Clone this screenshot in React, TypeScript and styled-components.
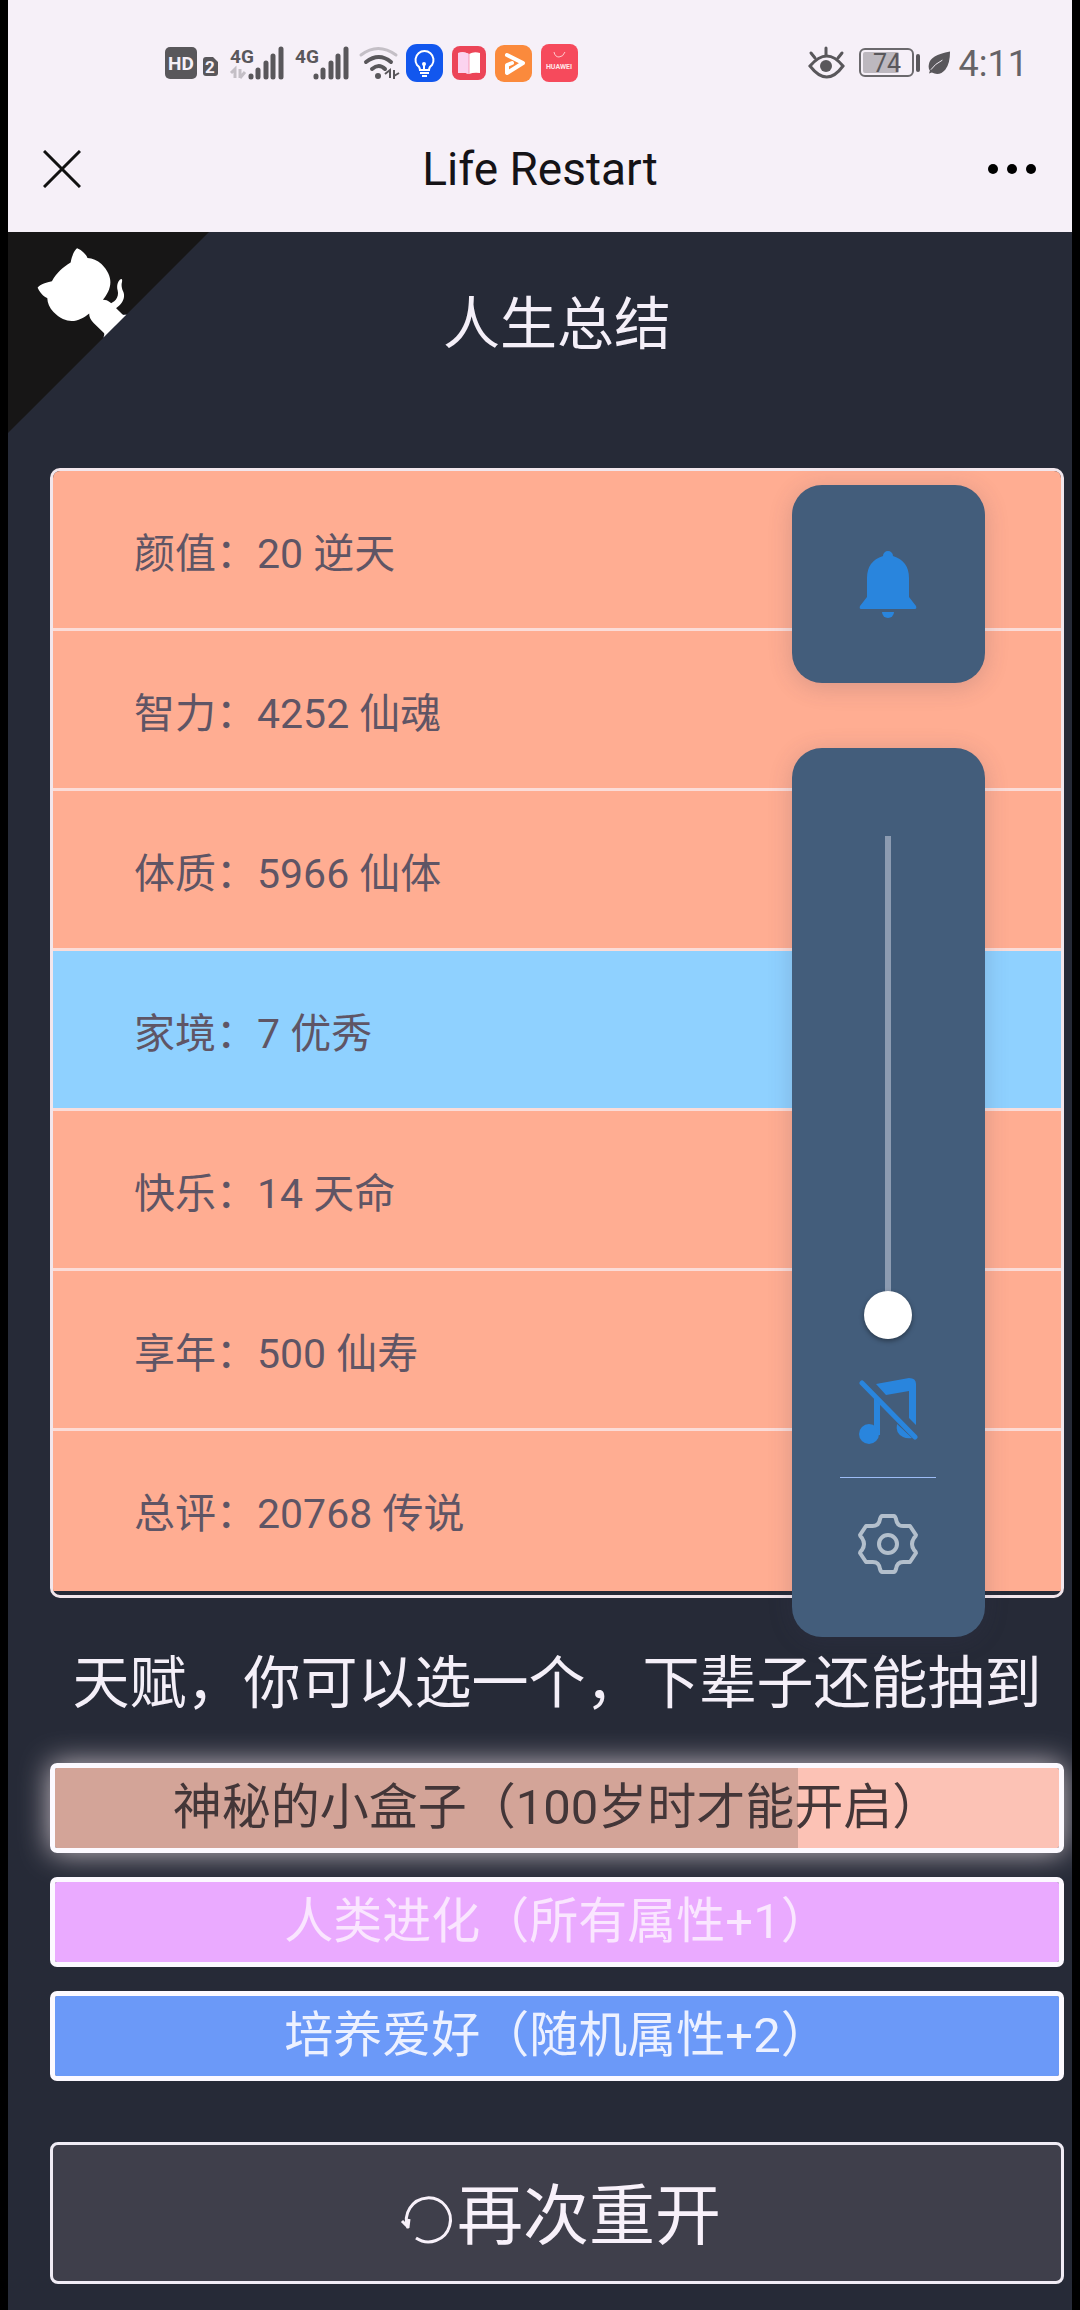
import React, { useState } from "react";
import styled, { createGlobalStyle } from "styled-components";

const GlobalStyle = createGlobalStyle`
  * { box-sizing: border-box; }
  body {
    margin: 0;
    background: #000;
    font-family: Roboto, "Noto Sans CJK SC", sans-serif;
  }
  button { font-family: inherit; cursor: pointer; }
`;

const Phone = styled.div`
  position: relative;
  min-height: 100vh;
  padding: 0 8px;
  background: #000;
`;

const StatusBar = styled.header`
  display: flex;
  justify-content: space-between;
  align-items: center;
  height: 106px;
  padding: 20px 44px 0 157px;
  background: #f6f0f8;
  color: #59575b;
`;

const StatusGroup = styled.div<{ $gap: number }>`
  display: flex;
  align-items: center;
  gap: ${(p) => p.$gap}px;
`;

const Clock = styled.time`
  padding-top: 2px;
  font-size: 36px;
  line-height: 44px;
  color: #656367;
`;

const NavBar = styled.nav`
  display: grid;
  grid-template-columns: 120px 1fr 120px;
  align-items: center;
  height: 126px;
  background: #f6f0f8;
`;

const NavButton = styled.button<{ $end?: boolean }>`
  display: flex;
  justify-content: ${(p) => (p.$end ? "flex-end" : "flex-start")};
  padding: 12px 35px;
  border: 0;
  background: none;
  color: #111;
`;

const NavTitle = styled.h1`
  margin: 0;
  text-align: center;
  font-size: 46px;
  line-height: 56px;
  font-weight: 400;
  color: #151317;
`;

const Page = styled.main`
  position: relative;
  display: flex;
  flex-direction: column;
  min-height: calc(100vh - 232px);
  padding: 51px 8px 26px 42px;
  overflow: hidden;
  background: #262a37;
  color: #f4eff8;
`;

const CornerLink = styled.a`
  position: absolute;
  top: -19px;
  left: 0;
  display: block;
  line-height: 0;
`;

const Heading = styled.h2`
  margin: 0;
  text-align: center;
  font-size: 57px;
  line-height: 84px;
  font-weight: 400;
`;

const Summary = styled.ul`
  margin: 101px 0 0;
  padding: 0 0 4px;
  list-style: none;
  border: 3px solid #f2e6ec;
  border-radius: 10px;
  overflow: hidden;
`;

const SummaryRow = styled.li<{ $blue?: boolean }>`
  padding: 9px 81px 0;
  border-bottom: 3px solid #fbdcd8;
  font-size: 41px;
  line-height: 148px;
  color: #5f5565;
  background: ${(p) => (p.$blue ? "#8fd1ff" : "#ffad92")};
  &:last-child { border-bottom-color: #ffad92; }
`;

const TalentHeading = styled(Heading)`
  margin-top: 44px;
  white-space: nowrap;
`;

const TalentList = styled.div`
  display: flex;
  flex-direction: column;
  gap: 24px;
  margin-top: 37px;
`;

const Talent = styled.button<{ $bg: string; $color: string; $glow?: boolean }>`
  width: 100%;
  height: 90px;
  padding: 0;
  border: 5px solid #fcf9ff;
  border-radius: 7px;
  background: ${(p) => p.$bg};
  background-clip: padding-box;
  box-shadow: ${(p) => (p.$glow ? "0 0 30px rgba(255, 240, 245, 0.75)" : "none")};
  font-size: 49px;
  line-height: 76px;
  color: ${(p) => p.$color};
`;

const RestartButton = styled.button`
  display: flex;
  justify-content: center;
  align-items: center;
  width: 100%;
  height: 142px;
  margin-top: 61px;
  padding: 8px 0 0;
  border: 3px solid #f0ecf5;
  border-radius: 8px;
  background: #3f3f4b;
  color: #f8f1fa;
  font-size: 66px;
  line-height: 96px;
`;

const VolumeOverlay = styled.aside`
  position: absolute;
  top: 485px;
  right: 95px;
  display: flex;
  flex-direction: column;
  gap: 65px;
  width: 193px;
`;

const Card = styled.div`
  display: flex;
  flex-direction: column;
  align-items: center;
  padding-right: 1px;
  border-radius: 30px;
  background: #435d7b;
  box-shadow: 0 4px 24px rgba(60, 60, 90, 0.2);
`;

const BellCard = styled(Card)`
  justify-content: center;
  height: 198px;
`;

const SliderCard = styled(Card)`
  height: 889px;
  padding-top: 88px;
`;

const IconButton = styled.button`
  display: flex;
  padding: 0;
  border: 0;
  background: none;
`;

const Slider = styled.input`
  appearance: none;
  writing-mode: vertical-lr;
  direction: rtl;
  width: 48px;
  height: 503px;
  margin: 0 0 39px;
  background: linear-gradient(#8c9bb1, #8c9bb1) center / 6px 100% no-repeat;
  &::-webkit-slider-thumb {
    appearance: none;
    width: 48px;
    height: 48px;
    border-radius: 50%;
    background: #fff;
    box-shadow: 0 2px 5px rgba(0, 0, 0, 0.4);
  }
`;

const Divider = styled.hr`
  width: 96px;
  margin: 31px 0 35px;
  border: 0;
  border-top: 1px solid #9dbcf5;
`;

const SignalIcon = ({ data }: { data?: boolean }) => (
  <svg width="56" height="44" viewBox="0 0 56 44" overflow="visible" aria-hidden="true">
    <text x="0" y="22" fontSize="19" fontWeight="700" fill="#59575b">4G</text>
    {data && (
      <path d="M1 32l4-4v9M10 28v9M10 37l5-6" fill="none" stroke="#c4bfc6" strokeWidth="3" />
    )}
    <path
      d="M21 35v1M28 29v7M36 22v14M43 15v21M51 8v28"
      stroke="#59575b"
      strokeWidth="5"
      strokeLinecap="round"
    />
  </svg>
);

const HdIcon = () => (
  <svg width="56" height="34" viewBox="0 0 56 34" aria-hidden="true">
    <rect x="0" y="1" width="32" height="32" rx="5" fill="#59575b" />
    <text x="16" y="24" fontSize="19" fontWeight="700" fill="#f6f0f8" textAnchor="middle">HD</text>
    <path d="M41 11h7l5 5v11q0 3-3 3h-9q-3 0-3-3v-13q0-3 3-3z" fill="#59575b" />
    <text x="45" y="27" fontSize="17" fontWeight="700" fill="#f6f0f8" textAnchor="middle">2</text>
  </svg>
);

const WifiIcon = () => (
  <svg width="37" height="36" viewBox="0 0 37 36" overflow="visible" aria-hidden="true">
    <g fill="none" strokeWidth="3" strokeLinecap="round">
      <path d="M1 10q17-13 35 0" stroke="#c4bfc6" />
      <path d="M6 17q13-10 25 0" stroke="#59575b" strokeWidth="4" />
      <path d="M12 24q7-6 13 0" stroke="#59575b" strokeWidth="4" />
    </g>
    <path d="M25 29l5-4v8M34 25v9M34 31l5-3" fill="none" stroke="#59575b" strokeWidth="2" />
    <circle cx="18" cy="31" r="3" fill="#59575b" />
  </svg>
);

const AppBulb = () => (
  <svg width="37" height="38" viewBox="0 0 37 38" aria-hidden="true">
    <rect width="37" height="38" rx="11" fill="#1257ee" />
    <g fill="none" stroke="#fff" strokeWidth="2">
      <path d="M14 26q0-3-3-5a9 9 0 1 1 15 0q-3 2-3 5z" />
      <path d="M14 29h9M16 32h5M18 26v-6" />
    </g>
    <circle cx="18" cy="20" r="2" fill="#fff" />
  </svg>
);

const AppBook = () => (
  <svg width="34" height="34" viewBox="0 0 34 34" aria-hidden="true">
    <rect width="34" height="34" rx="8" fill="#ec4558" />
    <path d="M6 7q6-2 11 1q5-3 11-1v20q-6-1-11 1q-5-2-11-1z" fill="#fff" />
    <path d="M6 7q6-2 11 1v20q-5-2-11-1z" fill="#fbd3ef" />
    <path d="M17 8v20" stroke="#f59bb4" />
  </svg>
);

const AppPlay = () => (
  <svg width="37" height="37" viewBox="0 0 37 37" aria-hidden="true">
    <rect width="37" height="37" rx="9" fill="#fb8a3c" />
    <path
      d="M12 10l16 8l-16 10v-8l5-2"
      fill="none"
      stroke="#fff"
      strokeWidth="4"
      strokeLinejoin="round"
      strokeLinecap="round"
    />
  </svg>
);

const AppHuawei = () => (
  <svg width="37" height="38" viewBox="0 0 37 38" aria-hidden="true">
    <rect width="37" height="38" rx="8" fill="#f64a5c" />
    <path d="M13 8q1 5 5 5t6-5" fill="none" stroke="#ffc9cd" strokeWidth="1" />
    <text x="18" y="25" fontSize="7" fontWeight="700" fill="#ffe6e8" textAnchor="middle">HUAWEI</text>
  </svg>
);

const EyeIcon = () => (
  <svg width="43" height="34" viewBox="0 0 43 34" aria-hidden="true">
    <g fill="none" stroke="#59575b" strokeWidth="3" strokeLinecap="round">
      <path d="M2 20q17-20 33 0q-16 22-33 0z" />
      <path d="M18 9v-7M7 12l-4-5M30 12l4-5" />
    </g>
    <circle cx="18" cy="20" r="6" fill="#59575b" />
  </svg>
);

const BatteryIcon = () => (
  <svg width="61" height="30" viewBox="0 0 61 30" aria-hidden="true">
    <rect x="1" y="1" width="53" height="27" rx="5" fill="none" stroke="#6b696d" strokeWidth="2" />
    <rect x="4" y="4" width="36" height="21" rx="2" fill="#bdb8bf" />
    <rect x="57" y="6" width="4" height="18" rx="2" fill="#59575b" />
    <text x="28" y="24" fontSize="25" fill="#59575b" textAnchor="middle">74</text>
  </svg>
);

const LeafIcon = () => (
  <svg width="23" height="26" viewBox="0 0 24 26" aria-hidden="true">
    <path d="M23 1q-21 4-22 13q-1 5 1 7l-1 3l3-1q8 4 14-3q5-6 5-19z" fill="#59575b" />
    <path d="M3 20q4-6 12-10" fill="none" stroke="#f6f0f8" strokeWidth="1" />
  </svg>
);

const CloseIcon = () => (
  <svg width="38" height="38" viewBox="0 0 38 38" aria-hidden="true">
    <path d="M1 1l36 36M37 1l-36 36" stroke="#111" strokeWidth="3" />
  </svg>
);

const MoreIcon = () => (
  <svg width="50" height="12" viewBox="0 0 50 12" aria-hidden="true">
    <circle cx="6" cy="6" r="5" />
    <circle cx="25" cy="6" r="5" />
    <circle cx="44" cy="6" r="5" />
  </svg>
);

const GithubCorner = () => (
  <svg width="220" height="220" viewBox="0 0 250 250" aria-hidden="true">
    <g transform="translate(250 0) scale(-1 1)">
      <path d="M0,0 L115,115 L130,115 L142,142 L250,250 L250,0 Z" fill="#171616" />
      <path
        d="M128.3,109.0 C113.8,99.7 119.0,89.6 119.0,89.6 C122.0,82.7 120.5,78.6 120.5,78.6 C119.2,72.0 123.4,76.3 123.4,76.3 C127.3,80.9 125.5,87.3 125.5,87.3 C122.9,97.6 130.6,101.9 134.4,103.2"
        fill="#fff"
      />
      <path
        d="M115.0,115.0 C114.9,115.1 118.7,116.5 119.8,115.4 L133.7,101.6 C136.9,99.2 139.9,98.4 142.2,98.6 C133.8,88.0 127.5,74.4 143.8,58.0 C148.5,53.4 154.0,51.2 159.7,51.0 C160.3,49.4 163.2,43.6 171.4,40.1 C171.4,40.1 176.1,42.5 178.8,56.2 C183.1,58.6 187.2,61.8 190.9,65.4 C194.5,69.0 197.7,73.2 200.1,77.6 C213.8,80.2 216.3,84.9 216.3,84.9 C212.7,93.1 206.9,96.0 205.4,96.6 C205.1,102.4 203.0,107.8 198.3,112.5 C181.9,128.9 168.3,122.5 157.7,114.1 C157.9,116.9 156.7,120.9 152.7,124.9 L141.0,136.5 C139.8,137.7 141.6,141.9 141.8,141.8 Z"
        fill="#fff"
      />
    </g>
  </svg>
);

const BellIcon = () => (
  <svg width="58" height="67" viewBox="0 0 58 67" fill="#2985dd" aria-hidden="true">
    <path d="M24 5a5 5 0 0 1 10 0q16 5 16 22v19l7 9q1 3-1 3h-54q-2 0-1-3l7-9v-19q0-17 16-22z" />
    <path d="M23 61h12a6 6 0 0 1-12 0z" />
  </svg>
);

const MusicOffIcon = () => (
  <svg width="60" height="68" viewBox="0 0 60 68" fill="#2985dd" aria-hidden="true">
    <path d="M18 6L51 0q7 0 7 6v41l-7-7v-27L28 17z" />
    <path d="M16 20l6 6v31h-6z" />
    <circle cx="11" cy="56" r="10" />
    <path d="M39 46l15 14q-5 1-9-1q-8-4-6-13z" />
    <path d="M4 5l53 54" stroke="#2985dd" strokeWidth="5" strokeLinecap="round" />
  </svg>
);

const GearIcon = () => (
  <svg width="60" height="62" viewBox="0 0 60 62" fill="none" stroke="#b3bfcc" aria-hidden="true">
    <path
      d="M24 3h12q1 0 2 3q1 8 9 7h5l6 9q0 1-2 3q-4 6 0 12q2 2 2 3l-6 9h-5q-8-1-9 7q-1 3-2 3h-12q-1 0-2-3q-1-8-9-7h-5l-6-9q0-1 2-3q4-6 0-12q-2-2-2-3l6-9h5q8 1 9-7q1-3 2-3z"
      strokeWidth="4"
      strokeLinejoin="round"
    />
    <circle cx="30" cy="31" r="9" strokeWidth="4" />
  </svg>
);

const RestartIcon = () => (
  <svg width="64" height="66" viewBox="0 0 64 66" fill="none" stroke="#f8f1fa" strokeWidth="3" aria-hidden="true">
    <path d="M15 44a22 22 0 1 1 8 10" />
    <path d="M9 37l6 6l1-8" strokeLinejoin="round" />
  </svg>
);

const stats: { text: string; blue?: boolean }[] = [
  { text: "颜值：20 逆天" },
  { text: "智力：4252 仙魂" },
  { text: "体质：5966 仙体" },
  { text: "家境：7 优秀", blue: true },
  { text: "快乐：14 天命" },
  { text: "享年：500 仙寿" },
  { text: "总评：20768 传说" },
];

const talents = [
  {
    name: "神秘的小盒子（100岁时才能开启）",
    bg: "linear-gradient(90deg, #d3a498 74%, #fcc2b5 74%)",
    color: "#433638",
    glow: true,
  },
  { name: "人类进化（所有属性+1）", bg: "#eaaaff", color: "#fae6ff" },
  { name: "培养爱好（随机属性+2）", bg: "#6b99f8", color: "#edf1ff" },
];

export default function App() {
  const [volume, setVolume] = useState(0);
  return (
    <Phone>
      <GlobalStyle />
      <StatusBar>
        <StatusGroup $gap={9}>
          <HdIcon />
          <SignalIcon data />
          <SignalIcon />
          <WifiIcon />
          <AppBulb />
          <AppBook />
          <AppPlay />
          <AppHuawei />
        </StatusGroup>
        <StatusGroup $gap={8}>
          <EyeIcon />
          <BatteryIcon />
          <LeafIcon />
          <Clock>4:11</Clock>
        </StatusGroup>
      </StatusBar>
      <NavBar>
        <NavButton type="button" aria-label="关闭">
          <CloseIcon />
        </NavButton>
        <NavTitle>Life Restart</NavTitle>
        <NavButton type="button" aria-label="更多" $end>
          <MoreIcon />
        </NavButton>
      </NavBar>
      <Page>
        <CornerLink href="#" aria-label="GitHub">
          <GithubCorner />
        </CornerLink>
        <Heading>人生总结</Heading>
        <Summary>
          {stats.map((s) => (
            <SummaryRow key={s.text} $blue={s.blue}>
              {s.text}
            </SummaryRow>
          ))}
        </Summary>
        <TalentHeading>天赋，你可以选一个，下辈子还能抽到</TalentHeading>
        <TalentList>
          {talents.map((t) => (
            <Talent key={t.name} type="button" $bg={t.bg} $color={t.color} $glow={t.glow}>
              {t.name}
            </Talent>
          ))}
        </TalentList>
        <RestartButton type="button">
          <RestartIcon />
          再次重开
        </RestartButton>
      </Page>
      <VolumeOverlay>
        <BellCard>
          <IconButton type="button" aria-label="响铃">
            <BellIcon />
          </IconButton>
        </BellCard>
        <SliderCard>
          <Slider
            type="range"
            min={0}
            max={100}
            value={volume}
            aria-label="媒体音量"
            onChange={(e) => setVolume(Number(e.target.value))}
          />
          <IconButton type="button" aria-label="静音">
            <MusicOffIcon />
          </IconButton>
          <Divider />
          <IconButton type="button" aria-label="设置">
            <GearIcon />
          </IconButton>
        </SliderCard>
      </VolumeOverlay>
    </Phone>
  );
}
